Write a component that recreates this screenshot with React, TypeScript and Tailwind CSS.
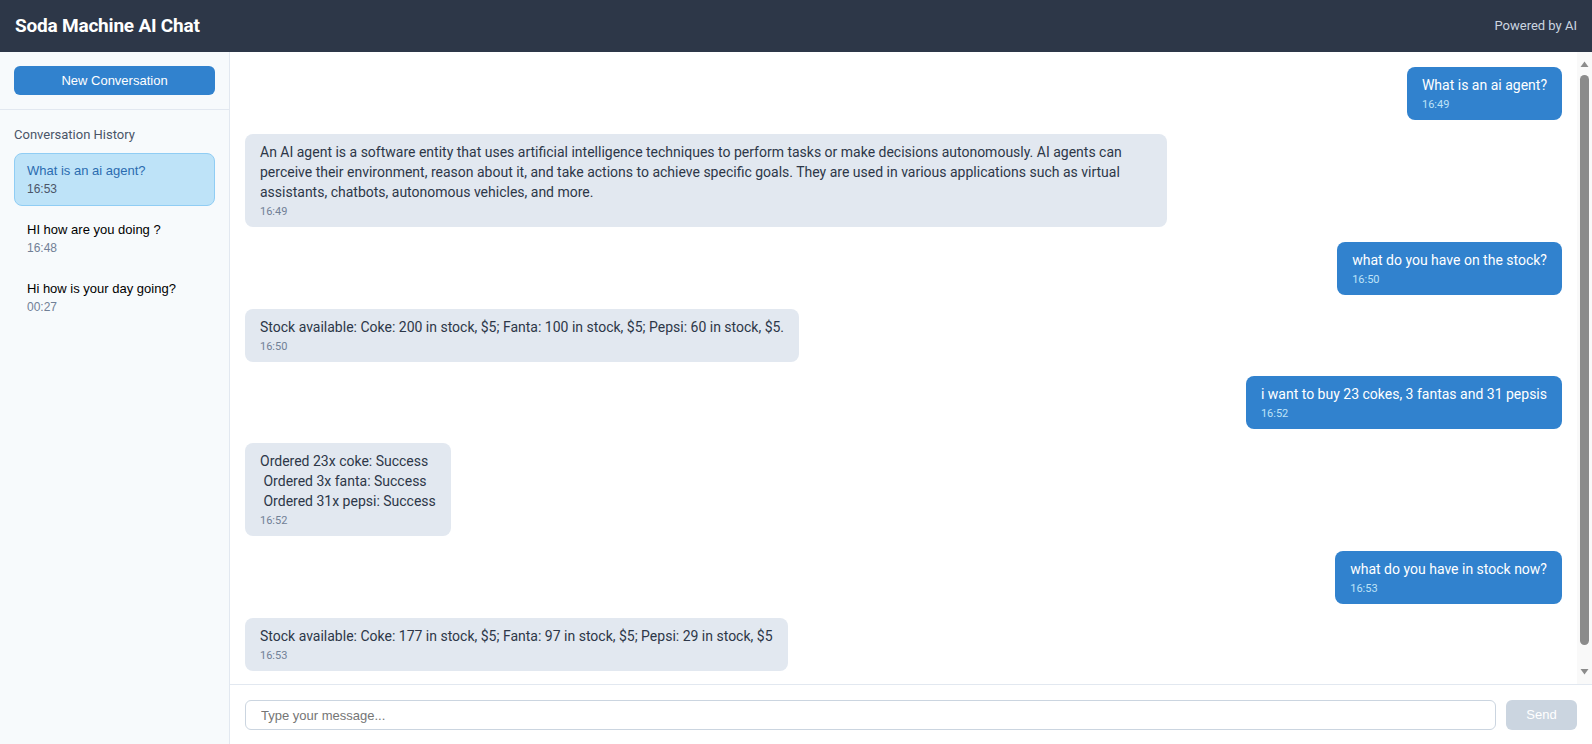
import React from "react";

type Msg = { role: "user" | "assistant"; text: string; time: string };

const messages: Msg[] = [
  { role: "user", text: "What is an ai agent?", time: "16:49" },
  {
    role: "assistant",
    text: "An AI agent is a software entity that uses artificial intelligence techniques to perform tasks or make decisions autonomously. AI agents can perceive their environment, reason about it, and take actions to achieve specific goals. They are used in various applications such as virtual assistants, chatbots, autonomous vehicles, and more.",
    time: "16:49",
  },
  { role: "user", text: "what do you have on the stock?", time: "16:50" },
  {
    role: "assistant",
    text: "Stock available: Coke: 200 in stock, $5; Fanta: 100 in stock, $5; Pepsi: 60 in stock, $5.",
    time: "16:50",
  },
  { role: "user", text: "i want to buy 23 cokes, 3 fantas and 31 pepsis", time: "16:52" },
  {
    role: "assistant",
    text: "Ordered 23x coke: Success\n Ordered 3x fanta: Success\n Ordered 31x pepsi: Success",
    time: "16:52",
  },
  { role: "user", text: "what do you have in stock now?", time: "16:53" },
  {
    role: "assistant",
    text: "Stock available: Coke: 177 in stock, $5; Fanta: 97 in stock, $5; Pepsi: 29 in stock, $5",
    time: "16:53",
  },
];

const history = [
  { title: "What is an ai agent?", time: "16:53", active: true },
  { title: "HI how are you doing ?", time: "16:48", active: false },
  { title: "Hi how is your day going?", time: "00:27", active: false },
];

function Bubble({ msg }: { msg: Msg }) {
  const mine = msg.role === "user";
  return (
    <div
      className={`max-w-[70%] rounded-lg px-[15px] py-2 ${
        mine ? "self-end bg-[#3182ce] text-white" : "self-start bg-[#e2e8f0] text-[#2d3748]"
      }`}
    >
      <div className="whitespace-pre-wrap text-[14px] leading-5">{msg.text}</div>
      <div
        className={`mt-[3px] text-[11px] leading-[14px] ${
          mine ? "text-[#bee3f8]" : "text-[#718096]"
        }`}
      >
        {msg.time}
      </div>
    </div>
  );
}

function ScrollTrack() {
  return (
    <div className="flex w-[15px] flex-none flex-col items-center bg-[#f9f9f9]">
      <svg width="15" height="18" className="flex-none">
        <polygon points="3.5,15 11.5,15 7.5,9.5" fill="#8b8b8b" />
      </svg>
      <div className="mb-[21px] mt-[5px] w-[9px] flex-1 rounded-full bg-[#8b8b8b]" />
      <svg width="15" height="18" className="flex-none">
        <polygon points="3.5,3 11.5,3 7.5,8.5" fill="#8b8b8b" />
      </svg>
    </div>
  );
}

export default function App() {
  return (
    <div className="flex h-screen flex-col bg-white font-['Roboto','Open_Sans',sans-serif]">
      {/* En-tête */}
      <div className="flex h-[52px] flex-none items-center justify-between bg-[#2d3748] px-[15px]">
        <div className="text-[19px] font-bold tracking-[-0.2px] text-white">Soda Machine AI Chat</div>
        <div className="text-[13px] text-[#cbd5e0]">Powered by AI</div>
      </div>

      <div className="flex min-h-0 flex-1">
        {/* Barre latérale */}
        <div className="flex w-[230px] flex-none flex-col border-r border-[#e2e8f0] bg-[#f7fafc]">
          <div className="border-b border-[#e2e8f0] p-[14px]">
            <button className="h-[29px] w-full rounded-md bg-[#3182ce] font-['Liberation_Sans',Arial,sans-serif] text-[13px] text-white">
              New Conversation
            </button>
          </div>
          <div className="px-[14px] pt-[15px]">
            <div className="mb-2 text-[13px] leading-5 text-[#4a5568]">Conversation History</div>
            <div className="flex flex-col gap-1.5">
              {history.map((h) => (
                <button
                  key={h.title}
                  className={`rounded-lg border px-3 py-[9px] text-left font-['Liberation_Sans',Arial,sans-serif] ${
                    h.active ? "border-[#90cdf4] bg-[#bee3f8]" : "border-transparent"
                  }`}
                >
                  <div
                    className={`text-[13px] leading-4 ${h.active ? "text-[#2b6cb0]" : "text-black"}`}
                  >
                    {h.title}
                  </div>
                  <div
                    className={`mt-[3px] text-[12px] leading-[14px] ${
                      h.active ? "text-[#4a5568]" : "text-[#718096]"
                    }`}
                  >
                    {h.time}
                  </div>
                </button>
              ))}
            </div>
          </div>
        </div>

        {/* Zone de discussion */}
        <div className="flex min-w-0 flex-1 flex-col">
          <div className="flex min-h-0 flex-1">
            <div className="flex min-w-0 flex-1 flex-col gap-[14.25px] overflow-y-auto p-[15px] [scrollbar-width:none]">
              {messages.map((m, i) => (
                <Bubble key={i} msg={m} />
              ))}
            </div>
            <ScrollTrack />
          </div>
          <div className="flex gap-[10px] border-t border-[#e2e8f0] px-[15px] pb-[14px] pt-[15px]">
            <input
              className="h-[30px] min-w-0 flex-1 rounded-md border border-[#cbd5e0] px-[15px] font-['Liberation_Sans',Arial,sans-serif] text-[13px] outline-none placeholder:text-[#757575]"
              placeholder="Type your message..."
            />
            <button className="h-[30px] w-[71px] rounded-md bg-[#cbd5e0] font-['Liberation_Sans',Arial,sans-serif] text-[13px] text-white">
              Send
            </button>
          </div>
        </div>
      </div>
    </div>
  );
}
